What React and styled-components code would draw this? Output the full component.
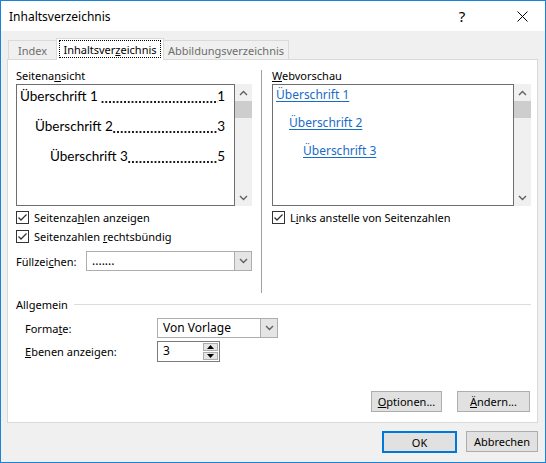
import React from 'react';
import styled, { createGlobalStyle } from 'styled-components';

const GlobalStyle = createGlobalStyle`
  html, body {
    margin: 0;
    padding: 0;
    background: #fff;
  }
  body {
    font-family: "Noto Sans", "Segoe UI", sans-serif;
    font-size: 11px;
    color: #000;
  }
  * {
    box-sizing: border-box;
  }
`;

const Window = styled.div`
  width: 546px;
  height: 463px;
  border: 1px solid #1883d7;
  display: flex;
  flex-direction: column;
  background: #f0f0f0;
`;

const TitleBar = styled.div`
  height: 30px;
  background: #fff;
  display: flex;
  align-items: center;
  padding-left: 8px;
  font-size: 12px;
`;

const Title = styled.div`
  flex: 1;
`;

const CaptionButton = styled.div`
  width: 46px;
  height: 30px;
  margin-right: ${p => p.$gap || 0}px;
  display: flex;
  align-items: center;
  justify-content: center;
  font-size: 15px;
`;

const Body = styled.div`
  flex: 1;
  display: flex;
  flex-direction: column;
  padding: 7px 7px 0 6px;
`;

const TabRow = styled.div`
  height: 21px;
  display: flex;
  align-items: flex-end;
  padding-left: 1px;
  position: relative;
  z-index: 1;
`;

const Tab = styled.div`
  width: ${p => p.$width}px;
  height: ${p => (p.$active ? '22px' : '19px')};
  margin-bottom: ${p => (p.$active ? '-1px' : '0')};
  margin-left: ${p => (p.$first ? '0' : '-1px')};
  padding: ${p => (p.$active ? '1px 0 0' : '0')};
  background: ${p => (p.$active ? '#fff' : '#f0f0f0')};
  border: 1px solid #d9d9d9;
  border-bottom: none;
  color: ${p => (p.$active ? '#000' : '#6d6d6d')};
  display: flex;
  justify-content: center;
  align-items: ${p => (p.$active ? 'flex-start' : 'center')};
  position: relative;
  z-index: ${p => (p.$active ? 2 : 1)};
`;

const FocusLabel = styled.span`
  border: 1px dotted #000;
  padding: 0 3px;
  height: 18px;
  display: flex;
  align-items: center;
`;

const Panel = styled.div`
  height: 364px;
  background: #fff;
  border: 1px solid #d9d9d9;
  display: flex;
  flex-direction: column;
  padding: 8px 6px 0 8px;
`;

const Columns = styled.div`
  height: 225px;
  display: grid;
  grid-template-columns: 236px 1px minmax(0, 1fr);
  column-gap: 9px;
`;

const Column = styled.div`
  display: flex;
  flex-direction: column;
  min-width: 0;
`;

const RightColumn = styled(Column)`
  padding-left: 1px;
`;

const Separator = styled.div`
  background: #a0a0a0;
  margin-top: 2px;
`;

const SectionLabel = styled.div`
  height: 16px;
  line-height: 15px;
`;

const PreviewWrap = styled.div`
  display: flex;
  height: 122px;
`;

const PreviewBox = styled.div`
  flex: 1;
  min-width: 0;
  border: 1px solid #6e6e6e;
  background: #fff;
  padding: ${p => p.$pad};
  display: flex;
  flex-direction: column;
  overflow: hidden;
`;

const Scrollbar = styled.div`
  width: 17px;
  background: #f0f0f0;
  display: flex;
  flex-direction: column;
  align-items: center;
`;

const ScrollArrow = styled.div`
  height: 17px;
  width: 17px;
  display: flex;
  align-items: center;
  justify-content: center;
`;

const ScrollThumb = styled.div`
  width: 17px;
  height: 17px;
  background: #cdcdcd;
`;

const ScrollTrack = styled.div`
  flex: 1;
`;

const TocLine = styled.div`
  display: flex;
  font-family: Lato, "Noto Sans", sans-serif;
  font-size: 13.5px;
  height: 30px;
  line-height: 22px;
  padding-left: ${p => p.$indent}px;
  white-space: nowrap;
`;

/* dotted tab leader between heading and page number */
const Leader = styled.span`
  flex: 1;
  min-width: 0;
  height: 22px;
  margin-right: -1px;
  background-image: linear-gradient(to right, #1a1a1a 1.5px, transparent 1.5px);
  background-size: 3.75px 1.5px;
  background-repeat: repeat-x;
  background-position: right 0 top 15.5px;
`;

const WebLink = styled.a`
  font-size: 12px;
  color: #1a6bc6;
  text-decoration: underline;
  text-underline-offset: 2px;
  height: 28px;
  line-height: 18px;
  padding-left: ${p => p.$indent}px;
  display: block;
  align-self: flex-start;
`;

const CheckRow = styled.label`
  display: flex;
  align-items: center;
  height: 19px;
  gap: 5px;
  margin-top: ${p => p.$top || 0}px;
`;

const CheckBox = styled.span`
  width: 13px;
  height: 13px;
  border: 1px solid #333;
  background: #fff;
  display: flex;
  align-items: center;
  justify-content: center;
`;

const FieldRow = styled.div`
  display: flex;
  align-items: center;
  margin-top: ${p => p.$top || 0}px;
  padding-left: ${p => p.$indent || 0}px;
`;

const FieldLabel = styled.div`
  width: ${p => p.$width}px;
`;

const Combo = styled.div`
  width: ${p => p.$width}px;
  height: 20px;
  border: 1px solid #adadad;
  background: #fff;
  display: flex;
`;

const ComboText = styled.div`
  flex: 1;
  padding-left: 5px;
  line-height: 18px;
  font-size: 12px;
`;

const ComboDrop = styled.div`
  width: 17px;
  border-left: 1px solid #adadad;
  background: #e5e5e5;
  display: flex;
  align-items: center;
  justify-content: center;
`;

const Spin = styled.div`
  width: 63px;
  height: 21px;
  border: 1px solid #7a7a7a;
  display: flex;
  background: #fff;
`;

const SpinButtons = styled.div`
  width: 16px;
  display: flex;
  flex-direction: column;
  gap: 1px;
  padding: 1px 1px 1px 0;
`;

const SpinButton = styled.div`
  flex: 1;
  background: #e5e5e5;
  border: 1px solid #adadad;
  display: flex;
  align-items: center;
  justify-content: center;
`;

const GroupHeader = styled.div`
  display: flex;
  align-items: center;
  margin-top: 3px;
  height: 16px;
  gap: 6px;
`;

const GroupLine = styled.div`
  flex: 1;
  height: 1px;
  background: #dcdcdc;
`;

const Spacer = styled.div`
  flex: 1;
`;

const ButtonRow = styled.div`
  display: flex;
  justify-content: flex-end;
  gap: ${p => p.$gap}px;
  padding: ${p => p.$pad};
`;

const Button = styled.div`
  width: ${p => p.$width}px;
  height: ${p => (p.$default ? '22px' : '21px')};
  background: #e1e1e1;
  border: ${p => (p.$default ? '2px solid #0078d7' : '1px solid #adadad')};
  display: flex;
  align-items: center;
  justify-content: center;
`;

const Chevron = ({ dir = 'down', color = '#606060' }) => (
  <svg width="9" height="6" viewBox="0 0 9 6">
    <path
      d={dir === 'down' ? 'M1 1 L4.5 4.5 L8 1' : 'M1 5 L4.5 1.5 L8 5'}
      fill="none"
      stroke={color}
      strokeWidth="1.4"
    />
  </svg>
);

const Triangle = ({ up }) => (
  <svg width="7" height="4" viewBox="0 0 7 4">
    <path d={up ? 'M0 4 L3.5 0 L7 4 Z' : 'M0 0 L3.5 4 L7 0 Z'} fill="#000" />
  </svg>
);

const Check = () => (
  <svg width="11" height="11" viewBox="0 0 11 11">
    <path d="M1.5 5.5 L4 8 L9.5 2.5" fill="none" stroke="#333" strokeWidth="1.3" />
  </svg>
);

const Scroll = () => (
  <Scrollbar>
    <ScrollArrow><Chevron dir="up" /></ScrollArrow>
    <ScrollThumb />
    <ScrollTrack />
    <ScrollArrow><Chevron dir="down" /></ScrollArrow>
  </Scrollbar>
);

const tocEntries = [
  { title: 'Überschrift 1\u00a0', page: '1', indent: 0 },
  { title: 'Überschrift 2', page: '3', indent: 15 },
  { title: 'Überschrift 3', page: '5', indent: 30 },
];

const App = () => (
  <>
    <GlobalStyle />
    <Window>
      <TitleBar>
        <Title>Inhaltsverzeichnis</Title>
        <CaptionButton $gap={14}>?</CaptionButton>
        <CaptionButton>
          <svg width="11" height="11" viewBox="0 0 11 11">
            <path d="M0.5 0.5 L10.5 10.5 M10.5 0.5 L0.5 10.5" stroke="#000" strokeWidth="1" />
          </svg>
        </CaptionButton>
      </TitleBar>
      <Body>
        <TabRow>
          <Tab $first $width={49}>Index</Tab>
          <Tab $active $width={108}>
            <FocusLabel>Inhaltsver<u>z</u>eichnis</FocusLabel>
          </Tab>
          <Tab $width={126}>Abbildungsverzeichnis</Tab>
        </TabRow>
        <Panel>
          <Columns>
            <Column>
              <SectionLabel>Seitena<u>n</u>sicht</SectionLabel>
              <PreviewWrap>
                <PreviewBox $pad="0 9px 0 3px">
                  {tocEntries.map(e => (
                    <TocLine key={e.page} $indent={e.indent}>
                      <span>{e.title}</span>
                      <Leader />
                      <span>{e.page}</span>
                    </TocLine>
                  ))}
                </PreviewBox>
                <Scroll />
              </PreviewWrap>
              <CheckRow $top={2}>
                <CheckBox><Check /></CheckBox>
                <span>Seitenza<u>h</u>len anzeigen</span>
              </CheckRow>
              <CheckRow>
                <CheckBox><Check /></CheckBox>
                <span>Seitenzahlen <u>r</u>echtsbündig</span>
              </CheckRow>
              <FieldRow $top={5}>
                <FieldLabel $width={70}>Füllzei<u>c</u>hen:</FieldLabel>
                <Combo $width={166}>
                  <ComboText>.......</ComboText>
                  <ComboDrop><Chevron /></ComboDrop>
                </Combo>
              </FieldRow>
            </Column>
            <Separator />
            <RightColumn>
              <SectionLabel><u>W</u>ebvorschau</SectionLabel>
              <PreviewWrap>
                <PreviewBox $pad="1px 0 0 3px">
                  <WebLink $indent={0}>Überschrift 1</WebLink>
                  <WebLink $indent={13}>Überschrift 2</WebLink>
                  <WebLink $indent={27}>Überschrift 3</WebLink>
                </PreviewBox>
                <Scroll />
              </PreviewWrap>
              <CheckRow $top={2}>
                <CheckBox><Check /></CheckBox>
                <span>L<u>i</u>nks anstelle von Seitenzahlen</span>
              </CheckRow>
            </RightColumn>
          </Columns>
          <GroupHeader>
            <span>Allgemein</span>
            <GroupLine />
          </GroupHeader>
          <FieldRow $top={6} $indent={9}>
            <FieldLabel $width={132}>Forma<u>t</u>e:</FieldLabel>
            <Combo $width={121}>
              <ComboText>Von Vorlage</ComboText>
              <ComboDrop><Chevron /></ComboDrop>
            </Combo>
          </FieldRow>
          <FieldRow $top={3} $indent={9}>
            <FieldLabel $width={132}><u>E</u>benen anzeigen:</FieldLabel>
            <Spin>
              <ComboText>3</ComboText>
              <SpinButtons>
                <SpinButton><Triangle up /></SpinButton>
                <SpinButton><Triangle /></SpinButton>
              </SpinButtons>
            </Spin>
          </FieldRow>
          <Spacer />
          <ButtonRow $gap={15} $pad="0 1px 10px 0">
            <Button $width={71}><span><u>O</u>ptionen...</span></Button>
            <Button $width={73}><span><u>Ä</u>ndern...</span></Button>
          </ButtonRow>
        </Panel>
        <ButtonRow $gap={9} $pad="8px 0 9px 0">
          <Button $width={75} $default>OK</Button>
          <Button $width={72}>Abbrechen</Button>
        </ButtonRow>
      </Body>
    </Window>
  </>
);

export default App;
